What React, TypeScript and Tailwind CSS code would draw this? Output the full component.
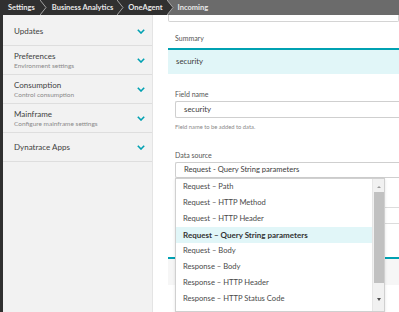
import React from "react";

const FONT = { fontFamily: "Lato, 'Open Sans', sans-serif" };

function Chevron() {
  return (
    <svg width="8" height="5" viewBox="0 0 8 5" className="shrink-0">
      <polyline points="0.8,0.8 4,4 7.2,0.8" fill="none" stroke="#00a1b2" strokeWidth="1.6" />
    </svg>
  );
}

function Sep({ last }: { last?: boolean }) {
  return (
    <svg width="8" height="15" viewBox="0 0 8 15" className="shrink-0">
      <rect x="0" y="0" width="8" height="15" fill={last ? "#6b6b6b" : "#303030"} />
      <polygon points="0,0 6,7.5 0,15" fill="#303030" />
      <polyline points="0,0 6,7.5 0,15" fill="none" stroke="#b0b0b0" strokeWidth="0.9" />
    </svg>
  );
}

const sideItems = [
  { t: "Updates" },
  { t: "Preferences", s: "Environment settings" },
  { t: "Consumption", s: "Control consumption" },
  { t: "Mainframe", s: "Configure mainframe settings" },
  { t: "Dynatrace Apps" },
];

const options = [
  "Request – Path",
  "Request – HTTP Method",
  "Request – HTTP Header",
  "Request – Query String parameters",
  "Request – Body",
  "Response – Body",
  "Response – HTTP Header",
  "Response – HTTP Status Code",
  "Fixed value",
];

export default function App() {
  return (
    <div className="w-[399px] h-[312px] overflow-hidden bg-white flex flex-col text-[#454646]" style={FONT}>
      {/* breadcrumb */}
      <div className="h-[15px] flex items-stretch bg-[#6b6b6b] text-[7.5px] font-bold text-[#e8e8e8] shrink-0 relative z-10">
        <div className="bg-[#303030] flex items-center pl-[8px] pr-[5px]">Settings</div>
        <Sep />
        <div className="bg-[#303030] flex items-center pl-[4px] pr-[4px]">Business Analytics</div>
        <Sep />
        <div className="bg-[#303030] flex items-center pl-[3px] pr-[4px]">OneAgent</div>
        <Sep last />
        <div className="flex items-center pl-[3px]">Incoming</div>
      </div>
      <div className="flex flex-1 min-h-0">
        {/* sidebar */}
        <div className="w-[153px] shrink-0 flex bg-[#f2f2f2] border-r border-[#e4e4e4]">
          <div className="w-[3px] bg-[#303030]" />
          <div className="flex-1 pt-[2px]">
            {sideItems.map((it) => (
              <div key={it.t} className="h-[29px] border-b border-[#dedede] flex items-center pl-[11px] pr-[7px]">
                <div className="flex-1 flex flex-col">
                  <div className="text-[8px] leading-[10px] text-[#3f3f3f]">{it.t}</div>
                  {it.s && <div className="text-[6.5px] leading-[9px] text-[#8a8a8a]">{it.s}</div>}
                </div>
                <Chevron />
              </div>
            ))}
          </div>
        </div>
        {/* main */}
        <div className="flex-1 min-w-0 pl-[15px] flex flex-col">
          <div className="h-[7px] border-x border-b border-[#d4d4d4] rounded-b-[2px] shrink-0" />
          <div className="mt-[9px] h-[14px] leading-[14px] pl-[7px] text-[7px] text-[#555]">Summary</div>
          <div className="mt-[3px] h-[26px] border-t-2 border-[#00a1b2] bg-[#e1f6f8] flex items-center pl-[8px] text-[7.8px] text-[#3c3c3c] shrink-0">
            security
          </div>
          <div className="pl-[7px] flex flex-col">
            <div className="mt-[14px] h-[12px] leading-[12px] text-[7px] text-[#555]">Field name</div>
            <div className="mt-[1px] h-[17px] border border-[#cfcfcf] rounded-l-[2px] border-r-0 flex items-center pl-[8px] text-[7.8px] text-[#3c3c3c]">
              security
            </div>
            <div className="mt-[3px] h-[12px] leading-[12px] text-[5.8px] text-[#8a8a8a]">Field name to be added to data.</div>
            <div className="mt-[16px] h-[12px] leading-[12px] text-[7px] text-[#555]">Data source</div>
            <div className="relative mt-[1px]">
              <div className="h-[16px] border border-[#cfcfcf] border-r-0 rounded-l-[2px] flex items-center pl-[8px] text-[7.6px] text-[#3c3c3c]">
                Request - Query String parameters
              </div>
              {/* content behind the menu */}
              <div className="mt-[29px] h-[17px] border border-[#dcdcdc] border-r-0" />
            </div>
          </div>
          <div className="mt-[33px] h-[28px] border-t-2 border-[#00a1b2] bg-[#f6f6f6] relative">
            <div className="absolute left-[7px] top-[4px] w-[2px] h-[3px] bg-[#e8a34b]" />
          </div>
          {/* dropdown menu overlay */}
          <div className="absolute left-[175px] top-[178px] w-[210px] h-[134px] bg-white border border-[#d0d0d0] flex shadow-sm z-20">
            <div className="flex-1 flex flex-col overflow-hidden">
              {options.map((o, i) => (
                <div
                  key={o}
                  className={
                    "h-[16px] shrink-0 flex items-center pl-[7px] " +
                    (i === 3 ? "bg-[#e1f6f8] font-bold text-[#333] text-[8px]" : "text-[#4a4a4a] text-[7.6px]")
                  }
                >
                  {o}
                </div>
              ))}
            </div>
            <div className="w-[12px] bg-[#f1f1f1] border-l border-[#e6e6e6] flex flex-col items-center">
              <svg width="6" height="12" viewBox="0 0 6 12" className="mt-[1px]">
                <polygon points="1,8 5,8 3,6" fill="#9a9a9a" />
              </svg>
              <div className="w-[10px] h-[91px] bg-[#c1c1c1]" />
              <div className="flex-1" />
              <svg width="6" height="12" viewBox="0 0 6 12" className="mb-[5px]">
                <polygon points="1,4 5,4 3,7" fill="#505050" />
              </svg>
            </div>
          </div>
        </div>
      </div>
    </div>
  );
}
